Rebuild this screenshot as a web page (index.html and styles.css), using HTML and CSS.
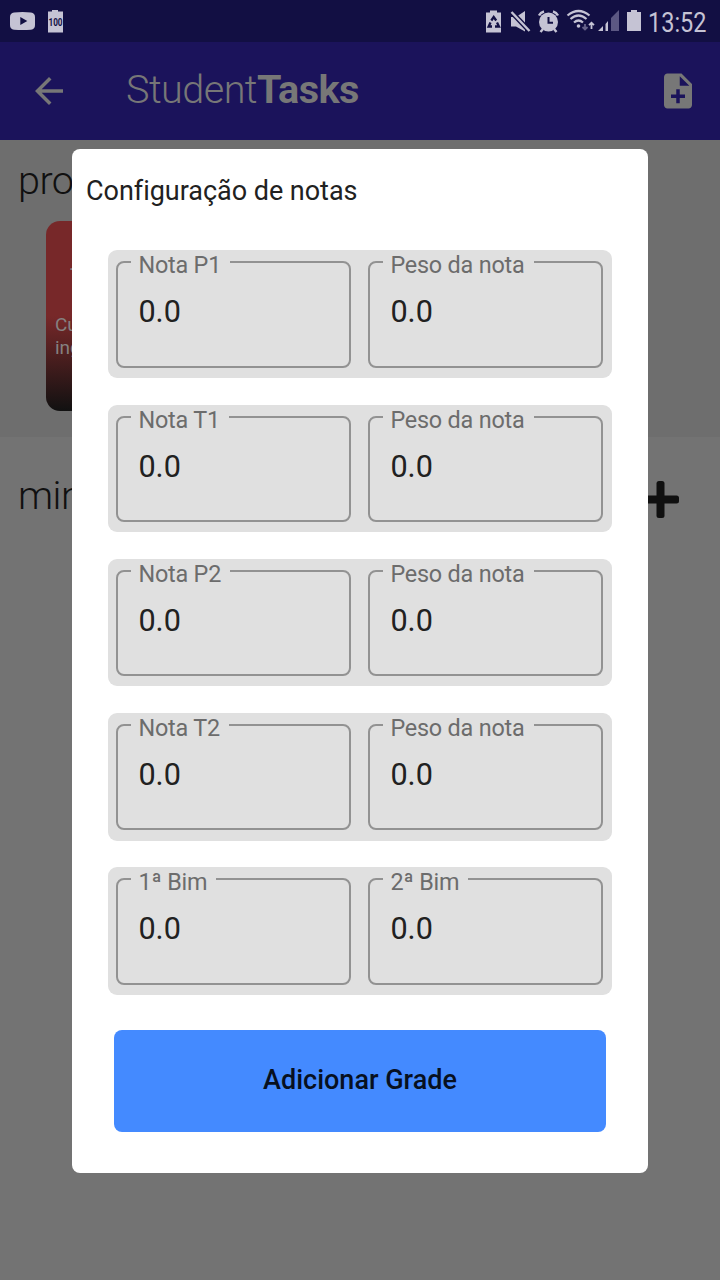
FILE: index.html
```html
<!DOCTYPE html>
<html lang="pt-BR">
<head>
<meta charset="utf-8">
<title>StudentTasks</title>
<link rel="stylesheet" href="styles.css">
</head>
<body>
<div class="screen">
  <div class="status">
    <svg class="status-icons" width="720" height="42" viewBox="0 0 720 42" fill="#c5c3d4">
      <path d="M14 12.4Q22.500 11.600 31 12.400Q35 13 35 17V25Q35 29.300 31 29.700Q22.500 30.400 14 29.700Q10 29.300 10 25V17Q10 13 14 12.400ZM20.300 17V25L27.300 21Z" fill-rule="evenodd"/>
      <path d="M48 11.500H52V10H58V11.500H63V32.500H48Z"/>
      <path d="M486 12.500H490V10.500H497V12.500H501V32.500H486Z"/>
      <g fill="none" stroke="#120f43" stroke-width="2.300">
        <path d="M491.300 20.500L493.700 17L496.200 20.500M490.500 22.500L488.600 26.500H492M495 26.500H499L497 22.500"/>
      </g>
      <path d="M511 17H516L525 11V31.500L516 26.500H511Z"/>
      <path d="M511.500 12L529.500 31" stroke="#120f43" stroke-width="5"/>
      <path d="M511.500 12L529.500 31" stroke="#c5c3d4" stroke-width="2.400"/>
      <circle cx="548.500" cy="22" r="9.500"/>
      <path d="M548.500 17V22.800H553" fill="none" stroke="#120f43" stroke-width="2"/>
      <path d="M539 15.500Q540.500 12.500 544 11.500M553 11.500Q556.500 12.500 558 15.500M543 29L540.500 32M554 29L556.500 32" fill="none" stroke="#c5c3d4" stroke-width="2.400"/>
      <g fill="none" stroke="#c5c3d4" stroke-width="2.200">
        <path d="M567.500 15.500Q578.500 6.500 589.500 15.500M570.500 19Q578.500 12 586.500 19M574 22.500Q578.500 18.500 583 22.500"/>
        <path d="M591.500 29V23.500M589 25.200L591.500 22.700L594 25.200" stroke-width="1.800"/>
        <path d="M585 24V29M582.500 27L585 29.500L587.500 27" stroke="#67638b" stroke-width="1.800"/>
      </g>
      <circle cx="578.500" cy="26" r="1.800"/>
      <path d="M598 31L603 26V31ZM605.500 24L608 21V31H605.500Z"/>
      <path d="M611 18L619 10V31H611Z" fill="#5c5883"/>
      <path d="M627 12H631V10H637V12H641V31H627Z"/>
    </svg>
    <span class="charge">100</span>
    <span class="clock">13:52</span>
  </div>
  <div class="appbar">
    <svg class="back" width="42" height="42" viewBox="0 0 24 24" fill="#777"><path d="M20 11H7.830l5.590-5.590L12 4l-8 8 8 8 1.410-1.410L7.830 13H20z"/></svg>
    <div class="brand">Student<b>Tasks</b></div>
    <svg class="add-note" width="42" height="42" viewBox="0 0 24 24" fill="#777"><path d="M14 2H6c-1.100 0-1.990.9-1.990 2L4 20c0 1.100.89 2 1.990 2H18c1.100 0 2-.9 2-2V8zm2 14h-3v3h-2v-3H8v-2h3v-3h2v3h3zm-3-7V3.500L18.500 9z"/></svg>
  </div>
  <section class="tests">
    <h2>pro</h2>
    <div class="task">
      <span class="grade">-</span>
      <p>Cu<br>ing</p>
    </div>
  </section>
  <section class="subjects">
    <h2>min</h2>
    <svg width="37" height="37" viewBox="0 0 37 37" fill="#101010"><rect x="14.500" width="8" height="37" rx="2.500"/><rect y="14.500" width="37" height="8" rx="2.500"/></svg>
  </section>
  <div class="dialog">
    <h1>Configuração de notas</h1>
    <form class="grades">
      <div class="row">
        <div class="field"><label>Nota P1</label><span>0.0</span></div>
        <div class="field"><label>Peso da nota</label><span>0.0</span></div>
      </div>
      <div class="row">
        <div class="field"><label>Nota T1</label><span>0.0</span></div>
        <div class="field"><label>Peso da nota</label><span>0.0</span></div>
      </div>
      <div class="row">
        <div class="field"><label>Nota P2</label><span>0.0</span></div>
        <div class="field"><label>Peso da nota</label><span>0.0</span></div>
      </div>
      <div class="row">
        <div class="field"><label>Nota T2</label><span>0.0</span></div>
        <div class="field"><label>Peso da nota</label><span>0.0</span></div>
      </div>
      <div class="row">
        <div class="field"><label>1ª Bim</label><span>0.0</span></div>
        <div class="field"><label>2ª Bim</label><span>0.0</span></div>
      </div>
    </form>
    <button class="submit" type="button">Adicionar Grade</button>
  </div>
</div>
</body>
</html>
```

FILE: styles.css
```css
* { box-sizing: border-box; }
body { margin: 0; font-family: Roboto, sans-serif; }
h1, h2, p { margin: 0; font-weight: 400; }
.screen { position: relative; width: 720px; height: 1280px; overflow: hidden; background: #737373; }
.status { position: relative; height: 42px; background: #120f43; color: #c5c3d4; }
.status-icons { display: block; }
.charge { position: absolute; left: 48px; top: 16px; width: 15px; font-size: 10.5px; line-height: 13px; font-weight: 700; display: flex; justify-content: center; transform: scaleX(.78); color: #120f43; }
.clock { position: absolute; left: 648px; top: 8px; font-size: 27px; line-height: 30px; transform: scaleX(.87); transform-origin: left; }
.appbar { display: flex; align-items: center; height: 98px; padding: 0 21px 0 28px; background: #1b135b; }
.brand { flex: 1; margin-left: 56px; padding-bottom: 3px; font-size: 39.6px; line-height: 48px; font-weight: 300; letter-spacing: -0.55px; color: #777; white-space: nowrap; }
.brand b { font-weight: 700; }
.tests { height: 297px; padding: 17px 18px 16px; background: #6e6e6e; }
h2 { font-size: 39.6px; line-height: 48px; font-weight: 300; letter-spacing: -0.55px; color: #101010; }
.task { display: flex; flex-direction: column; width: 160px; height: 190px; margin: 16px 28px; padding: 32px 9px 0; border-radius: 14px; background: linear-gradient(#772829 50%, #111 100%); color: #858080; font-size: 19px; line-height: 23px; }
.grade { height: 60px; padding-left: 15px; font-size: 24px; line-height: 30px; }
.subjects { display: flex; justify-content: space-between; align-items: center; padding: 35px 41px 0 18px; }
.subjects svg { margin-top: 7px; }
.dialog { position: absolute; left: 72px; top: 149px; width: 576px; height: 1024px; padding: 26px 36px 0; border-radius: 8px; background: #fff; }
h1 { margin-left: -22px; font-size: 27px; line-height: 32px; letter-spacing: -0.03px; color: #212121; }
.grades { display: grid; gap: 26.5px; margin-top: 43.4px; }
.row { display: grid; grid-template-columns: 235px 235px; gap: 17px; height: 127.7px; padding: 11px 8.4px 10px; border-radius: 9px; background: #e0e0e0; }
.field { position: relative; height: 106.5px; padding: 31px 20px; border: 2px solid #929292; border-radius: 8px; color: #212121; font-size: 30.6px; line-height: 36px; }
.field label { position: absolute; left: 13px; top: -13px; padding: 1px 9px 0 7px; background: #e0e0e0; color: #6c6c6c; font-size: 23.4px; line-height: 28px; letter-spacing: -0.2px; white-space: nowrap; }
.submit { display: block; width: 492px; height: 102px; margin: 35.5px 6px 0; padding: 0 0 2px; border: 0; border-radius: 8px; background: #448aff; color: #07101f; font: 500 27px/100px Roboto, sans-serif; }
```
